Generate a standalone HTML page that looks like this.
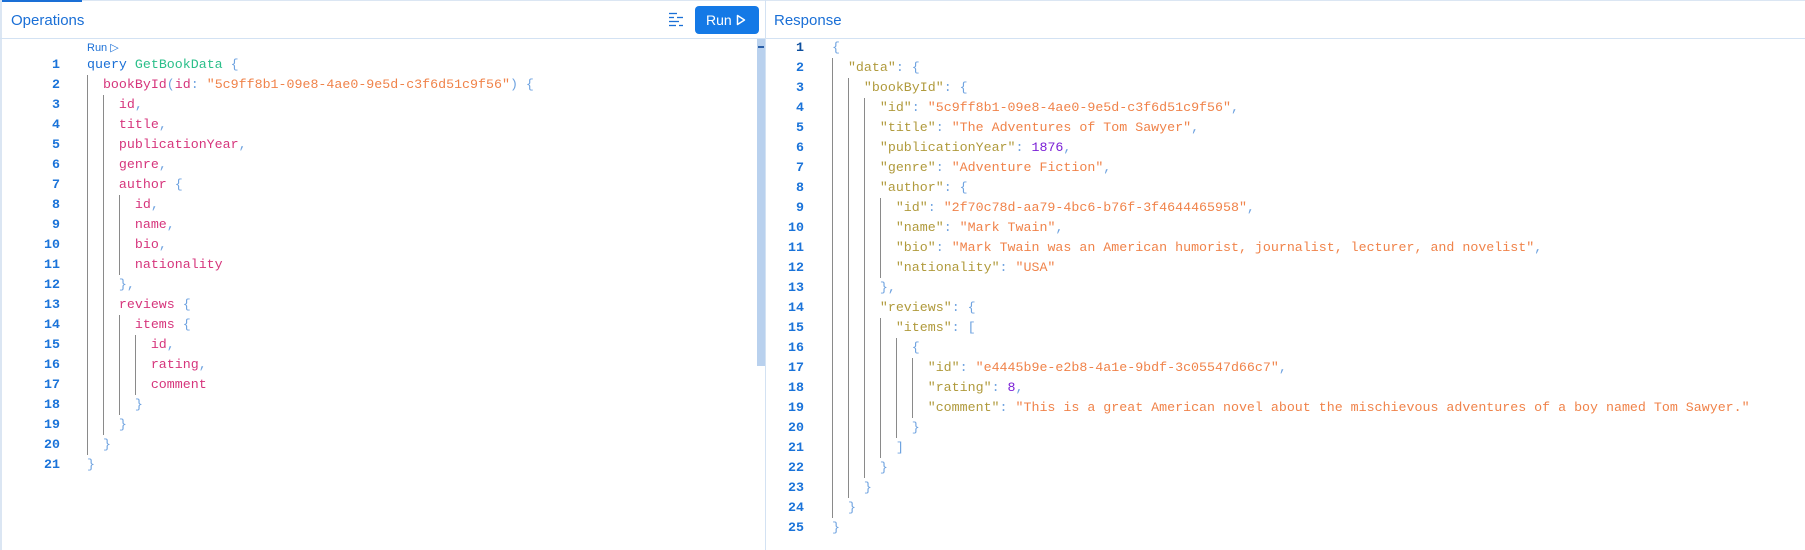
<!DOCTYPE html>
<html><head><meta charset="utf-8"><style>
html,body{margin:0;padding:0;width:1805px;height:550px;overflow:hidden;background:#fff;font-family:"Liberation Sans",sans-serif}
.abs{position:absolute}
.code{font-family:"Liberation Mono",monospace;font-size:13.3px;line-height:20px;white-space:pre}
.ln{position:absolute;text-align:right;color:#1a73d9;font-weight:bold;font-family:"Liberation Mono",monospace;font-size:13.3px;line-height:20px}
.g{display:inline-block;width:2ch;height:20px;vertical-align:top;box-shadow:inset 1px 0 0 #8a8a8a}
.p{color:#6fa3e0}.k{color:#1a6fd6}.n{color:#2bbf8a}.f{color:#d6357c}.s{color:#f0834a}.j{color:#b09a3c}.num{color:#7a1fd6}
</style></head><body>
<div class="abs" style="left:0;top:0;width:1805px;height:1px;background:#dbe6f3"></div>
<div class="abs" style="left:0;top:0;width:82px;height:2px;background:#1a6fd6"></div>
<div class="abs" style="left:0;top:0;width:2px;height:550px;background:#dbe6f3"></div>
<div class="abs" style="left:0;top:38px;width:1805px;height:1px;background:#d3e2f3"></div>
<div class="abs" style="left:765px;top:0;width:1px;height:550px;background:#d3e2f3"></div>
<div class="abs" style="left:11px;top:12px;font-size:15px;color:#1a6fd6">Operations</div>
<div class="abs" style="left:774px;top:12px;font-size:15px;color:#1a6fd6">Response</div>
<svg class="abs" style="left:668px;top:12px" width="17" height="15" viewBox="0 0 17 15"><g stroke="#1a6fd6" stroke-width="1.3"><line x1="1" y1="1.5" x2="9" y2="1.5"/><line x1="1" y1="5.5" x2="6" y2="5.5"/><line x1="9" y1="5.5" x2="15" y2="5.5"/><line x1="1" y1="9.5" x2="11" y2="9.5"/><line x1="1" y1="13.5" x2="8" y2="13.5"/><line x1="11" y1="13.5" x2="15" y2="13.5"/></g></svg>
<div class="abs" style="left:695px;top:6px;width:64px;height:28px;background:#1479e6;border-radius:4px;color:#fff;font-size:14px;line-height:28px"><span style="position:absolute;left:11px">Run</span><svg style="position:absolute;left:41px;top:8px" width="10" height="12" viewBox="0 0 10 12"><path d="M1.5 1.5 L8.5 6 L1.5 10.5 Z" fill="none" stroke="#fff" stroke-width="1.5" stroke-linejoin="round"/></svg></div>
<div class="abs" style="left:757px;top:39px;width:8px;height:327px;background:#b9d1ee"></div>
<div class="abs" style="left:758px;top:46px;width:6px;height:2px;background:#2a5fa8"></div>
<div class="abs" style="left:87px;top:41px;font-size:11px;color:#1a6fd6">Run ▷</div>

<div class="ln" style="left:20px;top:55px;width:40px">1<br>2<br>3<br>4<br>5<br>6<br>7<br>8<br>9<br>10<br>11<br>12<br>13<br>14<br>15<br>16<br>17<br>18<br>19<br>20<br>21</div>
<div class="abs code" style="left:87px;top:55px"><div><span class="k">query</span> <span class="n">GetBookData</span> <span class="p">{</span></div><div><span class="g"></span><span class="f">bookById</span><span class="p">(</span><span class="f">id</span><span class="p">:</span> <span class="s">"5c9ff8b1-09e8-4ae0-9e5d-c3f6d51c9f56"</span><span class="p">) {</span></div><div><span class="g"></span><span class="g"></span><span class="f">id</span><span class="p">,</span></div><div><span class="g"></span><span class="g"></span><span class="f">title</span><span class="p">,</span></div><div><span class="g"></span><span class="g"></span><span class="f">publicationYear</span><span class="p">,</span></div><div><span class="g"></span><span class="g"></span><span class="f">genre</span><span class="p">,</span></div><div><span class="g"></span><span class="g"></span><span class="f">author</span> <span class="p">{</span></div><div><span class="g"></span><span class="g"></span><span class="g"></span><span class="f">id</span><span class="p">,</span></div><div><span class="g"></span><span class="g"></span><span class="g"></span><span class="f">name</span><span class="p">,</span></div><div><span class="g"></span><span class="g"></span><span class="g"></span><span class="f">bio</span><span class="p">,</span></div><div><span class="g"></span><span class="g"></span><span class="g"></span><span class="f">nationality</span></div><div><span class="g"></span><span class="g"></span><span class="p">},</span></div><div><span class="g"></span><span class="g"></span><span class="f">reviews</span> <span class="p">{</span></div><div><span class="g"></span><span class="g"></span><span class="g"></span><span class="f">items</span> <span class="p">{</span></div><div><span class="g"></span><span class="g"></span><span class="g"></span><span class="g"></span><span class="f">id</span><span class="p">,</span></div><div><span class="g"></span><span class="g"></span><span class="g"></span><span class="g"></span><span class="f">rating</span><span class="p">,</span></div><div><span class="g"></span><span class="g"></span><span class="g"></span><span class="g"></span><span class="f">comment</span></div><div><span class="g"></span><span class="g"></span><span class="g"></span><span class="p">}</span></div><div><span class="g"></span><span class="g"></span><span class="p">}</span></div><div><span class="g"></span><span class="p">}</span></div><div><span class="p">}</span></div></div>

<div class="ln" style="left:764px;top:38px;width:40px"><span style="color:#0d4f9e">1</span><br>2<br>3<br>4<br>5<br>6<br>7<br>8<br>9<br>10<br>11<br>12<br>13<br>14<br>15<br>16<br>17<br>18<br>19<br>20<br>21<br>22<br>23<br>24<br>25</div>
<div class="abs code" style="left:832px;top:38px"><div><span class="p">{</span></div><div><span class="g"></span><span class="j">"data"</span><span class="p">: {</span></div><div><span class="g"></span><span class="g"></span><span class="j">"bookById"</span><span class="p">: {</span></div><div><span class="g"></span><span class="g"></span><span class="g"></span><span class="j">"id"</span><span class="p">:</span> <span class="s">"5c9ff8b1-09e8-4ae0-9e5d-c3f6d51c9f56"</span><span class="p">,</span></div><div><span class="g"></span><span class="g"></span><span class="g"></span><span class="j">"title"</span><span class="p">:</span> <span class="s">"The Adventures of Tom Sawyer"</span><span class="p">,</span></div><div><span class="g"></span><span class="g"></span><span class="g"></span><span class="j">"publicationYear"</span><span class="p">:</span> <span class="num">1876</span><span class="p">,</span></div><div><span class="g"></span><span class="g"></span><span class="g"></span><span class="j">"genre"</span><span class="p">:</span> <span class="s">"Adventure Fiction"</span><span class="p">,</span></div><div><span class="g"></span><span class="g"></span><span class="g"></span><span class="j">"author"</span><span class="p">: {</span></div><div><span class="g"></span><span class="g"></span><span class="g"></span><span class="g"></span><span class="j">"id"</span><span class="p">:</span> <span class="s">"2f70c78d-aa79-4bc6-b76f-3f4644465958"</span><span class="p">,</span></div><div><span class="g"></span><span class="g"></span><span class="g"></span><span class="g"></span><span class="j">"name"</span><span class="p">:</span> <span class="s">"Mark Twain"</span><span class="p">,</span></div><div><span class="g"></span><span class="g"></span><span class="g"></span><span class="g"></span><span class="j">"bio"</span><span class="p">:</span> <span class="s">"Mark Twain was an American humorist, journalist, lecturer, and novelist"</span><span class="p">,</span></div><div><span class="g"></span><span class="g"></span><span class="g"></span><span class="g"></span><span class="j">"nationality"</span><span class="p">:</span> <span class="s">"USA"</span></div><div><span class="g"></span><span class="g"></span><span class="g"></span><span class="p">},</span></div><div><span class="g"></span><span class="g"></span><span class="g"></span><span class="j">"reviews"</span><span class="p">: {</span></div><div><span class="g"></span><span class="g"></span><span class="g"></span><span class="g"></span><span class="j">"items"</span><span class="p">: [</span></div><div><span class="g"></span><span class="g"></span><span class="g"></span><span class="g"></span><span class="g"></span><span class="p">{</span></div><div><span class="g"></span><span class="g"></span><span class="g"></span><span class="g"></span><span class="g"></span><span class="g"></span><span class="j">"id"</span><span class="p">:</span> <span class="s">"e4445b9e-e2b8-4a1e-9bdf-3c05547d66c7"</span><span class="p">,</span></div><div><span class="g"></span><span class="g"></span><span class="g"></span><span class="g"></span><span class="g"></span><span class="g"></span><span class="j">"rating"</span><span class="p">:</span> <span class="num">8</span><span class="p">,</span></div><div><span class="g"></span><span class="g"></span><span class="g"></span><span class="g"></span><span class="g"></span><span class="g"></span><span class="j">"comment"</span><span class="p">:</span> <span class="s">"This is a great American novel about the mischievous adventures of a boy named Tom Sawyer."</span></div><div><span class="g"></span><span class="g"></span><span class="g"></span><span class="g"></span><span class="g"></span><span class="p">}</span></div><div><span class="g"></span><span class="g"></span><span class="g"></span><span class="g"></span><span class="p">]</span></div><div><span class="g"></span><span class="g"></span><span class="g"></span><span class="p">}</span></div><div><span class="g"></span><span class="g"></span><span class="p">}</span></div><div><span class="g"></span><span class="p">}</span></div><div><span class="p">}</span></div></div>
</body></html>
